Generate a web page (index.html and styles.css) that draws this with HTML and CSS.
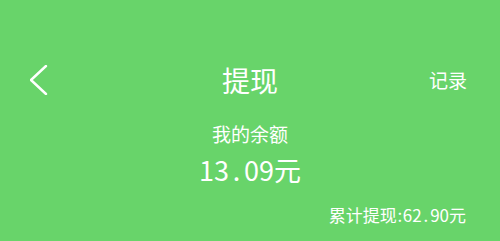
FILE: index.html
```html
<!DOCTYPE html>
<html lang="zh">
<head>
<meta charset="utf-8">
<link rel="stylesheet" href="styles.css">
</head>
<body>
<div class="screen">
  <header class="topbar">
    <div class="back">
      <svg width="18" height="30" viewBox="0 0 18 30"><polyline points="16,1 1,15 16,29" fill="none" stroke="#fff" stroke-width="2.4" stroke-linecap="round" stroke-linejoin="round"/></svg>
    </div>
    <div class="title">提现</div>
    <div class="record">记录</div>
  </header>
  <section class="balance">
    <div class="label">我的余额</div>
    <div class="amount">13<span class="dot">.</span>09元</div>
  </section>
  <div class="total">累计提现<span class="colon">:</span>62<span class="dot">.</span>90元</div>
</div>
</body>
</html>
```
FILE: styles.css
```css
html, body {
  margin: 0;
  padding: 0;
}
body {
  width: 500px;
  height: 241px;
  background: #68d46a;
  font-family: "Noto Sans CJK SC", "Noto Sans", sans-serif;
  color: #ffffff;
  overflow: hidden;
}
.screen {
  display: flex;
  flex-direction: column;
  padding-top: 60px;
}
.topbar {
  display: grid;
  grid-template-columns: 1fr auto 1fr;
  align-items: center;
  height: 40px;
}
.back {
  padding-left: 30px;
  display: flex;
  align-items: center;
}
.back svg {
  display: block;
}
.title {
  font-size: 28px;
  line-height: 40px;
}
.record {
  justify-self: end;
  padding-right: 33px;
  font-size: 19px;
  line-height: 40px;
}
.balance {
  display: flex;
  flex-direction: column;
  align-items: center;
  margin-top: 20px;
}
.label {
  font-size: 19px;
  line-height: 28px;
}
.amount {
  font-size: 27px;
  line-height: 40px;
  margin-top: 2px;
}
.amount .dot {
  display: inline-block;
  width: 0.55em;
  text-align: center;
}
.total {
  align-self: flex-end;
  padding-right: 34px;
  font-size: 17px;
  line-height: 24px;
  margin-top: 13px;
}
.total .dot {
  display: inline-block;
  width: 0.5em;
  text-align: center;
}
.colon {
  display: inline-block;
  width: 0.35em;
  text-align: center;
}
```
